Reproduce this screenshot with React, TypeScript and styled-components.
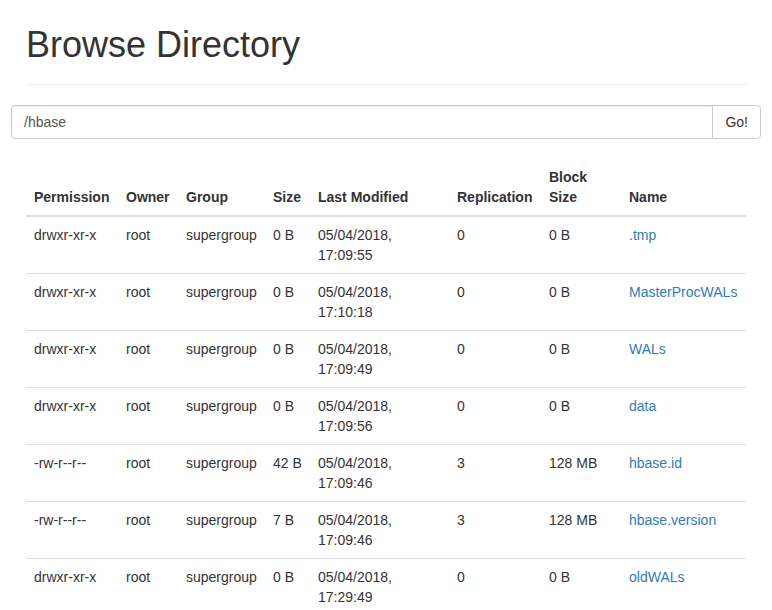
import React from "react";
import styled, { createGlobalStyle } from "styled-components";

const GlobalStyle = createGlobalStyle`
  html, body {
    margin: 0;
    padding: 0;
    background: #fff;
  }
  body {
    font-family: "Liberation Sans", Arial, Helvetica, sans-serif;
    font-size: 14px;
    line-height: 1.42857143;
    color: #333;
  }
  * { box-sizing: border-box; }
`;

const Container = styled.div`
  width: 750px;
  margin: 0 auto;
  padding: 25px 15px 0;
`;

const PageHeader = styled.div`
  margin: 0 0 20px;
  padding-bottom: 9px;
  border-bottom: 1px solid #eee;
`;

const Title = styled.h1`
  margin: 0 0 10px;
  font-size: 36px;
  font-weight: 500;
  line-height: 1.1;
  color: #333;
`;

const Row = styled.div`
  margin: 0 -15px;
`;

const InputGroup = styled.div`
  display: flex;
  width: 100%;
`;

const PathInput = styled.input`
  flex: 1;
  height: 34px;
  padding: 6px 12px;
  font-family: inherit;
  font-size: 14px;
  line-height: 1.42857143;
  color: #555;
  background: #fff;
  border: 1px solid #ccc;
  border-radius: 4px 0 0 4px;
  box-shadow: inset 0 1px 1px rgba(0, 0, 0, 0.075);
  outline: none;
`;

const GoButton = styled.button`
  margin-left: -1px;
  height: 34px;
  padding: 6px 12px;
  font-family: inherit;
  font-size: 14px;
  line-height: 1.42857143;
  color: #333;
  background: #fff;
  border: 1px solid #ccc;
  border-radius: 0 4px 4px 0;
  cursor: pointer;
`;

const Table = styled.table`
  width: 100%;
  margin: 20px 0;
  border-collapse: collapse;
  border-spacing: 0;
  table-layout: fixed;
`;

const Col = styled.col<{ $w: number }>`
  width: ${(p) => p.$w}px;
`;

const Th = styled.th`
  padding: 8px;
  text-align: left;
  vertical-align: bottom;
  font-weight: bold;
  line-height: 1.42857143;
  border-bottom: 2px solid #ddd;
`;

const Td = styled.td`
  padding: 8px;
  vertical-align: top;
  line-height: 1.42857143;
  border-top: 1px solid #ddd;
`;

const NameLink = styled.a`
  color: #337ab7;
  text-decoration: none;
`;

type Entry = {
  perm: string;
  size: string;
  modified: string;
  repl: string;
  block: string;
  name: string;
};

const entries: Entry[] = [
  { perm: "drwxr-xr-x", size: "0 B", modified: "05/04/2018, 17:09:55", repl: "0", block: "0 B", name: ".tmp" },
  { perm: "drwxr-xr-x", size: "0 B", modified: "05/04/2018, 17:10:18", repl: "0", block: "0 B", name: "MasterProcWALs" },
  { perm: "drwxr-xr-x", size: "0 B", modified: "05/04/2018, 17:09:49", repl: "0", block: "0 B", name: "WALs" },
  { perm: "drwxr-xr-x", size: "0 B", modified: "05/04/2018, 17:09:56", repl: "0", block: "0 B", name: "data" },
  { perm: "-rw-r--r--", size: "42 B", modified: "05/04/2018, 17:09:46", repl: "3", block: "128 MB", name: "hbase.id" },
  { perm: "-rw-r--r--", size: "7 B", modified: "05/04/2018, 17:09:46", repl: "3", block: "128 MB", name: "hbase.version" },
  { perm: "drwxr-xr-x", size: "0 B", modified: "05/04/2018, 17:29:49", repl: "0", block: "0 B", name: "oldWALs" },
];

const columns: { label: string; width: number }[] = [
  { label: "Permission", width: 92 },
  { label: "Owner", width: 60 },
  { label: "Group", width: 87 },
  { label: "Size", width: 45 },
  { label: "Last Modified", width: 139 },
  { label: "Replication", width: 92 },
  { label: "Block Size", width: 80 },
  { label: "Name", width: 125 },
];

export default function App() {
  return (
    <>
      <GlobalStyle />
      <Container>
        <PageHeader>
          <Title>Browse Directory</Title>
        </PageHeader>
        <Row>
          <InputGroup>
            <PathInput defaultValue="/hbase" />
            <GoButton>Go!</GoButton>
          </InputGroup>
        </Row>
        <Table>
          <colgroup>
            {columns.map((c) => (
              <Col key={c.label} $w={c.width} />
            ))}
          </colgroup>
          <thead>
            <tr>
              {columns.map((c) => (
                <Th key={c.label}>{c.label}</Th>
              ))}
            </tr>
          </thead>
          <tbody>
            {entries.map((e) => (
              <tr key={e.name}>
                <Td>{e.perm}</Td>
                <Td>root</Td>
                <Td>supergroup</Td>
                <Td>{e.size}</Td>
                <Td>{e.modified}</Td>
                <Td>{e.repl}</Td>
                <Td>{e.block}</Td>
                <Td>
                  <NameLink href="#">{e.name}</NameLink>
                </Td>
              </tr>
            ))}
          </tbody>
        </Table>
      </Container>
    </>
  );
}
